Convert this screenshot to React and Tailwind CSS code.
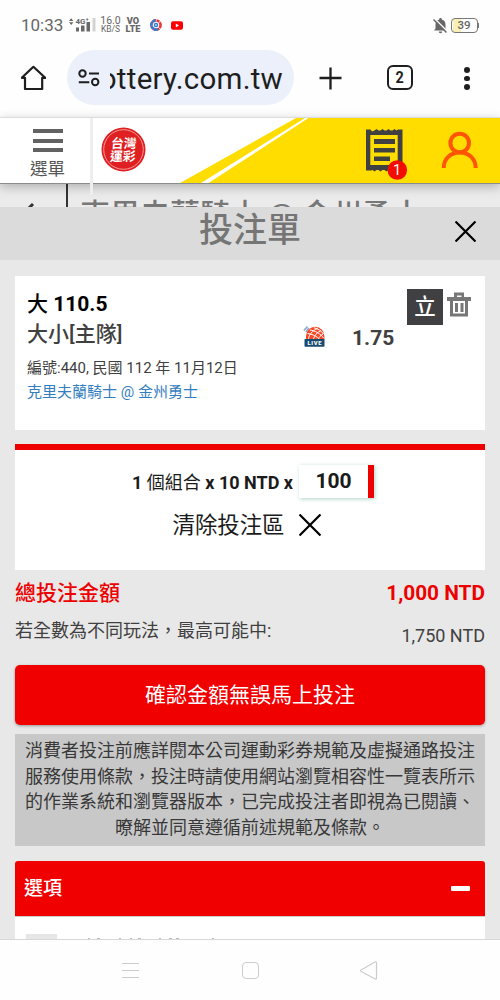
import React from "react";

function StatusBar() {
  return (
    <div className="flex h-[50px] shrink-0 items-start justify-between pl-[21px] pr-[21px] text-[#666]">
      <div className="flex items-center pt-[14px] h-[36px]">
        <span className="w-[47px] text-[17px] leading-[22px]">10:33</span>
        <svg width="28" height="18" viewBox="0 0 28 18" fill="#686868">
          <path d="M1 5l2.200-2.800 2.200 2.800zM1 6.200l2.200 2.800 2.200-2.800z" />
          <rect x="8" y="11.500" width="3" height="4" />
          <rect x="13" y="9.500" width="3.500" height="6" />
          <rect x="18.500" y="6" width="3.500" height="9.500" />
          <rect x="24.500" y="2" width="3" height="13.500" fill="#d3d3d3" />
          <text x="7.500" y="7.500" fontSize="8" fontWeight="700" fontFamily="Roboto, sans-serif">4G⁺</text>
        </svg>
        <div className="ml-[5px] flex w-[19px] flex-col items-center">
          <span className="text-[10.500px] leading-[8.500px]">16.0</span>
          <span className="text-[8.500px] leading-[8px]">KB/S</span>
        </div>
        <div className="ml-[5px] flex w-[16px] flex-col items-center text-[9.200px] font-black leading-[8.500px]">
          <span>VO</span>
          <span>LTE</span>
        </div>
        <svg className="ml-[9px]" width="12" height="12" viewBox="0 0 12 12" fill="none">
          <circle cx="6" cy="6" r="4.600" stroke="#e7383b" strokeWidth="2.600" strokeDasharray="3 .6" />
          <path d="M5.500 1.400A4.600 4.600 0 1 0 7.800 10.200" stroke="#2c7edb" strokeWidth="2.600" strokeDasharray="3.400 .5" />
          <circle cx="6" cy="6" r="2.200" fill="#287bd8" />
          <path d="M5 6h2" stroke="#fff" />
        </svg>
        <svg className="ml-[9px]" width="12" height="9" viewBox="0 0 12 9">
          <rect y=".3" width="12" height="8.400" rx="2" fill="#f00" />
          <path d="M4.800 2.600v3.800l3.200-1.900z" fill="#fff" />
        </svg>
      </div>
      <div className="flex h-[36px] items-center gap-[3px] pt-[14px]">
        <svg width="15" height="17" viewBox="0 0 15 17" fill="#666">
          <path d="M7.500 1c.9 0 1.300.6 1.300 1.400C11.200 3 12.500 5 12.500 7.500v4l1.500 2H1l1.500-2v-4C2.500 5 3.800 3 6.200 2.400 6.200 1.600 6.600 1 7.500 1zM5.800 14.500h3.400c0 1-.7 1.700-1.700 1.700s-1.700-.7-1.700-1.700z" />
          <path d="M1.500 1.500l13 13" stroke="#fff" strokeWidth="1.500" />
          <path d="M.5 2.500l13 13" stroke="#666" strokeWidth="1.500" />
        </svg>
        <div className="flex items-center">
          <div className="flex h-[15px] w-[27px] items-center justify-center rounded-[4px] border border-[#777] bg-[linear-gradient(90deg,white_1px,#fbefb8_1px,#fbefb8_9px,white_9px)] text-[11.500px] font-medium leading-[13px]">39</div>
          <div className="h-[5px] w-[1.500px] bg-[#777]" />
        </div>
      </div>
    </div>
  );
}

function BrowserBar() {
  return (
    <div className="flex h-[67px] shrink-0 items-start text-[#1e1e1e]">
      <svg className="ml-[21px] mt-[15px]" width="25" height="26" viewBox="0 0 25 26" fill="none" stroke="#1e1e1e" strokeWidth="2.200">
        <path d="M.8 12.800h3.200V24h17.200V12.800h3L12.400 1.800z" strokeLinejoin="round" />
      </svg>
      <div className="ml-[21px] flex h-[55px] w-[227px] items-center rounded-full bg-[#ebf0fa] pl-[11px] pr-[11px]">
        <svg width="22" height="18" viewBox="0 0 22 18" fill="none" stroke="#1e1e1e" strokeWidth="2">
          <circle cx="4.500" cy="4.500" r="3.200" />
          <circle cx="17.200" cy="13" r="3.200" />
          <path d="M11 4.500h10M.8 13.300h10.500" />
        </svg>
        <div className="ml-[10px] flex h-[55px] w-[173px] items-center justify-end overflow-hidden pt-[3px]">
          <span className="whitespace-nowrap text-[29.500px] leading-[40px] tracking-[0.25px]">ottery.com.tw</span>
        </div>
      </div>
      <svg className="ml-[25px] mt-[17px]" width="23" height="23" viewBox="0 0 23 23" stroke="#1e1e1e" strokeWidth="2.300">
        <path d="M11.500 .5v22M.5 11h22" />
      </svg>
      <div className="ml-[45px] mt-[15px] flex h-[25px] w-[26px] items-center justify-center rounded-[6px] border-[2px] border-[#1e1e1e] text-[16px] font-bold leading-none"><span className="scale-x-90">2</span></div>
      <div className="ml-[51px] mt-[17px] flex flex-col gap-[3px]">
        <i className="block h-[5.500px] w-[5.500px] rounded-full bg-[#1e1e1e]" />
        <i className="block h-[5.500px] w-[5.500px] rounded-full bg-[#1e1e1e]" />
        <i className="block h-[5.500px] w-[5.500px] rounded-full bg-[#1e1e1e]" />
      </div>
    </div>
  );
}

function SiteHeader() {
  return (
    <header className="relative z-10 flex h-[67px] shrink-0 border-b border-t border-b-[#8b8b8b] border-t-[#dcdcdc] bg-white shadow-[0_3px_10px_rgba(0,0,0,0.25)]">
      <div className="flex w-[90px] flex-col items-center pl-[5px] pt-[11px]">
        <div className="flex flex-col gap-[5.500px]">
          <i className="block h-[4px] w-[30px] bg-[#626262]" />
          <i className="block h-[4px] w-[30px] bg-[#626262]" />
          <i className="block h-[4px] w-[30px] bg-[#626262]" />
        </div>
        <span className="mt-[5px] text-[17.500px] leading-[24px] text-[#555]">選單</span>
      </div>
      <div className="h-[77px] w-[3px] shrink-0 bg-[#eee]" />
      <svg className="ml-[8px] mt-[9px] shrink-0" width="45" height="45" viewBox="0 0 45 45" fill="none">
        <circle cx="22.500" cy="22.500" r="22" fill="#df1f21" />
        <circle cx="22.500" cy="22.500" r="19.800" stroke="#f79a96" strokeWidth="1" />
        <g fill="#fff" fontFamily="'Noto Sans CJK TC', sans-serif" fontWeight="700" fontSize="12.800" textAnchor="middle">
          <text x="22.500" y="21.200" transform="skewX(-4) translate(1.500 0)">台灣</text>
          <text x="22.500" y="34" transform="skewX(-4) translate(1.500 0)">運彩</text>
        </g>
      </svg>
      <svg className="ml-[34px] shrink-0" width="320" height="65" viewBox="0 0 320 65">
        <path d="M0 65L116 0H320V65z" fill="#fd0" />
        <path d="M21 65L125 0h3.500L28.500 65z" fill="#fff" />
        <path d="M186 11.500h4.500l1.500 2 2.500-1 2-1.500 2 1.500h2l2-1.500 2 1.500h2l2-1.500 2 1.500h2l2-1.500 2 1.500 1.500-1h4.500V52.500h-4.500l-1.500-1.500-2.500 1.500-1.500 1-2-1.500h-2l-2 1.500-2-1.500h-2l-2 1.500-2-1.500h-2l-2 1.500-2-1.500-1.500.500h-5zM190.300 17v30h27.400V17z" fill="#404040" fillRule="evenodd" />
        <g fill="#404040">
          <rect x="194" y="21" width="21" height="5" />
          <rect x="194" y="30" width="21" height="4.500" />
          <rect x="194" y="38.500" width="16" height="4.500" />
        </g>
        <circle cx="217.300" cy="52" r="9.800" fill="#f30c00" />
        <text x="217" y="57" fill="#fff" fontSize="14.500" fontFamily="Roboto, sans-serif" textAnchor="middle">1</text>
        <g fill="none" stroke="#ff5400" strokeWidth="4">
          <circle cx="279.700" cy="25" r="9.300" />
          <path d="M263.700 50c0-9 6.500-15.500 16-15.500s16 6.500 16 15.500" />
        </g>
      </svg>
    </header>
  );
}

function BetSlip() {
  return (
    <section className="bg-[#e8e8e8] px-[15px] pb-0 text-[#404040]">
      <article className="mt-4 flex h-[154px] justify-between bg-white pl-[12px] pr-[14px]">
        <div className="pt-[13px]">
          <h2 className="text-[21px] font-bold leading-[30px] text-black"><span className="font-medium">大</span> 110.5</h2>
          <p className="text-[21px] font-medium leading-[30px]">大小[主隊]</p>
          <p className="mt-[7px] whitespace-nowrap text-[15px] leading-[24px]">編號:440, 民國 112 年 11月12日</p>
          <p className="whitespace-nowrap text-[15px] leading-[24px] text-[#337ebf]">克里夫蘭騎士 @ 金州勇士</p>
        </div>
        <div className="flex items-start">
          <svg className="mt-[48px]" width="23" height="25" viewBox="0 0 23 25" fill="none">
            <path d="M.8 6.500l3.800-4M3 8l3-4" stroke="#8caecb" strokeWidth="1.800" />
            <path d="M3 16V12a9.200 9.200 0 0 1 18.400 0v4z" fill="#fa4827" />
            <path d="M4.500 9.500C9 10 14 12 17 16M6.800 6C12 6.500 18 10 20.500 14M11 3.800c4 .8 7.500 3.200 9.500 6.200M5.500 15c.5-4.500 4-8.500 9-10.500M10.500 15c.8-3.500 3.500-6.500 7.500-8.500M15.500 15c.5-2 2-3.500 4.500-5" stroke="#fff" strokeWidth="1" />
            <rect x="1.500" y="15" width="20" height="7.800" rx=".8" fill="#174b72" />
            <text x="11.800" y="21" fill="#fff" fontSize="5.800" fontWeight="900" letterSpacing=".7" textAnchor="middle" fontFamily="Roboto, sans-serif">LIVE</text>
          </svg>
          <span className="ml-[26px] mt-[47px] w-[55px] whitespace-nowrap text-[21px] font-bold leading-[30px]">1.75</span>
          <span className="mt-[13px] flex h-[36px] w-[36px] items-center justify-center bg-[#404042] text-[21.500px] font-medium leading-[36px] text-white">立</span>
          <svg className="ml-[4px] mt-[16px]" width="24" height="25" viewBox="0 0 24 25">
            <path d="M7 5V.5h10V5h7v4h-3v15.500H3V9H0V5zM10 5h4.500V3.500h-4.500zM6 9v12.500h12V9zM8 11h3v9H8zm5.500 0h3v9h-3z" fill="#777" fillRule="evenodd" />
          </svg>
        </div>
      </article>

      <div className="mt-[14px] flex h-[126px] flex-col items-center border-t-[6px] border-[#ee0000] bg-white">
        <div className="mt-[15px] flex items-start pl-[6px] text-[18px] font-bold leading-[34px] text-[#1b1b1b]">
          <span className="whitespace-nowrap pt-px">1 <span className="font-normal">個組合</span> x 10 NTD x</span>
          <span className="ml-[6px] flex h-[33px] w-[75px] items-center justify-center border-r-[6px] border-[#ee0000] bg-white text-[21px] leading-[33px] shadow-[1px_1px_4px_rgba(70,160,130,0.45)]">100</span>
        </div>
        <div className="mt-[8px] flex items-center gap-[15px] pr-[6px] text-[22.400px] leading-[34px] text-[#1b1b1b]">
          <span>清除投注區</span>
          <svg width="22" height="22" viewBox="0 0 22 22" stroke="#000" strokeWidth="2.200"><path d="M.5.500l21 21M21.500.500l-21 21" /></svg>
        </div>
      </div>

      <div className="flex h-[45px] items-center justify-between pt-[1px] text-[21px] leading-[30px] text-[#ee0000]">
        <span className="font-medium">總投注金額</span><span className="text-[20.800px] font-bold">1,000 NTD</span>
      </div>
      <div className="flex h-[50px] items-start justify-between pt-[1px] text-[18px] leading-[30px]">
        <span>若全數為不同玩法，最高可能中:</span><span className="mt-[5px]">1,750 NTD</span>
      </div>
      <button className="flex h-[60px] w-full items-center justify-center rounded-[5px] bg-[#f10000] text-[21px] leading-[30px] text-white shadow-[0_1px_3px_rgba(0,0,0,0.35)]">確認金額無誤馬上投注</button>
      <div className="mt-[9px] h-[112px] bg-[#c8c8c8] pt-[4px] text-center text-[18px] leading-[25.700px] text-[#383838]">
        <p className="whitespace-nowrap">消費者投注前應詳閱本公司運動彩券規範及虛擬通路投注<br />服務使用條款，投注時請使用網站瀏覽相容性一覽表所示<br />的作業系統和瀏覽器版本，已完成投注者即視為已閱讀、<br />暸解並同意遵循前述規範及條款。</p>
      </div>
      <div className="mt-[15px] flex h-[55px] items-center justify-between rounded-t-[3px] bg-[#f10000] pl-[9px] pr-[15px] text-white">
        <span className="text-[19px] font-medium leading-[30px]">選項</span>
        <i className="block h-[5px] w-[19px] rounded-[1px] bg-white" />
      </div>
      <div className="flex h-[23px] items-end border-t border-[#ccc] bg-white pl-[11px]">
        <div className="h-[5px] w-[31px] bg-[#e6e6e6]" />
        <svg className="ml-[31px]" width="130" height="2" viewBox="0 0 130 2" fill="#bbb">
          <path d="M0 1h2v1H0zM9 1h3v1H9zM31 1h2v1h-2zM42 1h2v1h-2zM50 1h3v1h-3zM71 1h2v1h-2zM81 1h3v1h-3zM88 1h3v1h-3zM124 1h2v1h-2z" />
        </svg>
      </div>
    </section>
  );
}

function AndroidNav() {
  return (
    <nav className="flex h-[61px] shrink-0 items-center border-t border-[#d8d8d8] bg-[#fefefe]">
      <svg className="ml-[122px]" width="17" height="17" viewBox="0 0 17 17" stroke="#ccc" strokeWidth="1.200"><path d="M0 1.500h17M0 8.500h17M0 15.500h17" /></svg>
      <div className="ml-[103px] h-[17px] w-[17px] rounded-[4px] border border-[#ccc]" />
      <svg className="ml-[101px]" width="18" height="19" viewBox="0 0 18 19" fill="none" stroke="#ccc" strokeWidth="1.200" strokeLinejoin="round"><path d="M1 9c-.6.400-.6.900 0 1.300L15 18q1.500.500 1.500-1V2q0-1.500-1.500-1z" /></svg>
    </nav>
  );
}

export default function App() {
  return (
    <main className="flex h-[1000px] w-[500px] flex-col overflow-hidden bg-[#fefefe] font-[Roboto,'Noto_Sans_CJK_TC',sans-serif]">
      <StatusBar />
      <BrowserBar />
      <SiteHeader />
      <div className="flex h-[23px] shrink-0 overflow-hidden bg-[#ebebeb]">
        <svg className="ml-[24px] mt-[19px] shrink-0" width="14" height="14" viewBox="0 0 14 14" fill="none" stroke="#333" strokeWidth="3"><path d="M9 1L3 7l6 6" /></svg>
        <div className="ml-[28px] h-[23px] w-[2px] shrink-0 bg-[#333]" />
        <span className="ml-[12px] mt-[13px] whitespace-nowrap text-[30px] font-medium leading-[36px] text-[#777]">克里夫蘭騎士 @ 金州勇士</span>
      </div>
      <div className="grid h-[53px] shrink-0 grid-cols-[1fr_auto_1fr] items-start bg-[#dbdbdb]">
        <span />
        <h1 className="pt-[3px] text-[34px] font-medium leading-[40px] text-[#757575]">投注單</h1>
        <svg className="mr-[24px] mt-[14px] justify-self-end" width="21" height="21" viewBox="0 0 21 21" stroke="#000" strokeWidth="2.200"><path d="M.5.500l20 20M20.500.500l-20 20" /></svg>
      </div>
      <div className="flex h-[679px] shrink-0 flex-col overflow-hidden bg-[#e8e8e8]"><BetSlip /></div>
      <AndroidNav />
    </main>
  );
}
